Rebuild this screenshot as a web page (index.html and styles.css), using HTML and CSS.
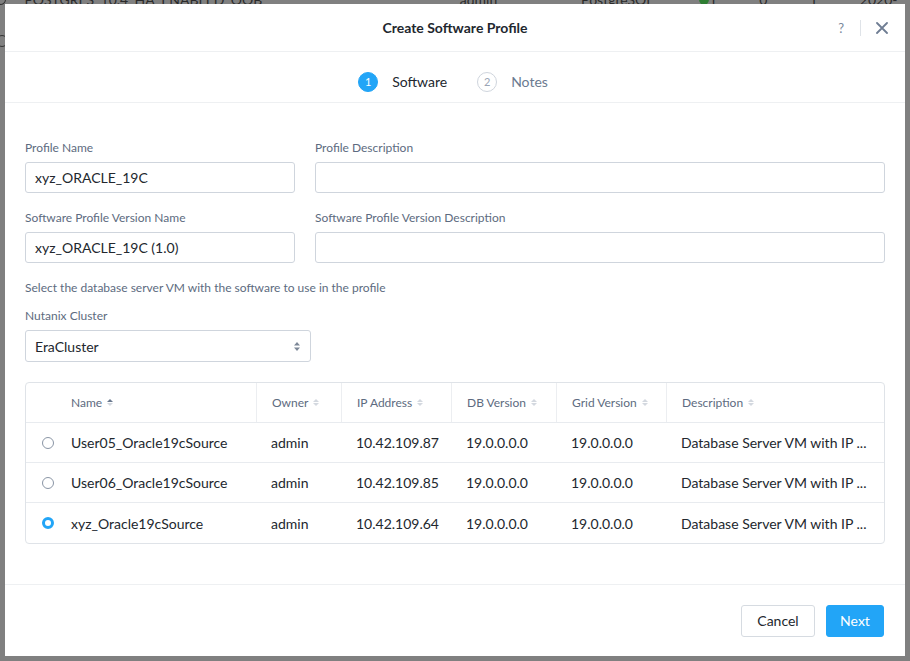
FILE: index.html
```html
<!DOCTYPE html>
<html>
<head>
<meta charset="utf-8">
<link rel="stylesheet" href="styles.css">
</head>
<body>
<div class="backdrop">
  <div class="bg-row">
    <span class="bg-radio"></span>
    <span class="bg-c1">POSTGRES_10.4_HA_ENABLED_OOB</span>
    <span class="bg-c2">admin</span>
    <span class="bg-c3">PostgreSQL</span>
    <span class="bg-dot"></span>
    <span class="bg-c4">1</span>
    <span class="bg-c5">0</span>
    <span class="bg-c6">1</span>
    <span class="bg-c7">2020-</span>
  </div>
  <div class="bg-row bg-row2">
    <span class="bg-radio"></span>
  </div>
</div>

<div class="modal">
  <div class="modal-header">
    <div class="title">Create Software Profile</div>
    <div class="header-actions">
      <span class="help">?</span>
      <span class="divider"></span>
      <svg class="close" width="12" height="12" viewBox="0 0 12 12"><path d="M1 1L11 11M11 1L1 11" stroke="#6f7d93" stroke-width="1.8" stroke-linecap="round"/></svg>
    </div>
  </div>

  <div class="stepper">
    <div class="step active"><span class="step-num">1</span><span class="step-label">Software</span></div>
    <div class="step"><span class="step-num">2</span><span class="step-label">Notes</span></div>
  </div>

  <div class="modal-body">
    <div class="form-row">
      <div class="field narrow">
        <label class="label">Profile Name</label>
        <div class="input">xyz_ORACLE_19C</div>
      </div>
      <div class="field wide">
        <label class="label">Profile Description</label>
        <div class="input"></div>
      </div>
    </div>
    <div class="form-row">
      <div class="field narrow">
        <label class="label">Software Profile Version Name</label>
        <div class="input">xyz_ORACLE_19C (1.0)</div>
      </div>
      <div class="field wide">
        <label class="label">Software Profile Version Description</label>
        <div class="input"></div>
      </div>
    </div>
    <p class="helper">Select the database server VM with the software to use in the profile</p>
    <label class="label cluster-label">Nutanix Cluster</label>
    <div class="select">
      <span>EraCluster</span>
      <svg width="6" height="9" viewBox="0 0 6 9"><path d="M3 0L6 3.5H0Z M3 9L6 5.5H0Z" fill="#7d8898"/></svg>
    </div>

    <div class="table">
      <div class="tr thead">
        <div class="td c-radio"></div>
        <div class="td c-name">Name <span class="sort active-up"><i class="up"></i><i class="down"></i></span></div>
        <div class="td c-owner">Owner <span class="sort"><i class="up"></i><i class="down"></i></span></div>
        <div class="td c-ip">IP Address <span class="sort"><i class="up"></i><i class="down"></i></span></div>
        <div class="td c-db">DB Version <span class="sort"><i class="up"></i><i class="down"></i></span></div>
        <div class="td c-grid">Grid Version <span class="sort"><i class="up"></i><i class="down"></i></span></div>
        <div class="td c-desc">Description <span class="sort"><i class="up"></i><i class="down"></i></span></div>
      </div>
      <div class="tr">
        <div class="td c-radio"><span class="radio"></span></div>
        <div class="td c-name">User05_Oracle19cSource</div>
        <div class="td c-owner">admin</div>
        <div class="td c-ip">10.42.109.87</div>
        <div class="td c-db">19.0.0.0.0</div>
        <div class="td c-grid">19.0.0.0.0</div>
        <div class="td c-desc">Database Server VM with IP ...</div>
      </div>
      <div class="tr">
        <div class="td c-radio"><span class="radio"></span></div>
        <div class="td c-name">User06_Oracle19cSource</div>
        <div class="td c-owner">admin</div>
        <div class="td c-ip">10.42.109.85</div>
        <div class="td c-db">19.0.0.0.0</div>
        <div class="td c-grid">19.0.0.0.0</div>
        <div class="td c-desc">Database Server VM with IP ...</div>
      </div>
      <div class="tr last">
        <div class="td c-radio"><span class="radio checked"></span></div>
        <div class="td c-name">xyz_Oracle19cSource</div>
        <div class="td c-owner">admin</div>
        <div class="td c-ip">10.42.109.64</div>
        <div class="td c-db">19.0.0.0.0</div>
        <div class="td c-grid">19.0.0.0.0</div>
        <div class="td c-desc">Database Server VM with IP ...</div>
      </div>
    </div>
  </div>

  <div class="modal-footer">
    <button class="btn btn-default">Cancel</button>
    <button class="btn btn-primary">Next</button>
  </div>
</div>
</body>
</html>
```

FILE: styles.css
```css
* { box-sizing: border-box; }
html, body { margin: 0; padding: 0; }
body {
  width: 910px;
  height: 661px;
  background: #808080;
  font-family: "Lato", "Liberation Sans", sans-serif;
  color: #22272e;
  overflow: hidden;
  position: relative;
}

.backdrop { color: #2b2b2b; font-size: 14px; }
.bg-row {
  display: flex;
  align-items: center;
  height: 20px;
  margin-top: -11px;
  white-space: nowrap;
}
.bg-row2 { margin-top: 22px; }
.bg-radio {
  width: 12px; height: 12px; border: 1px solid #333; border-radius: 50%;
  margin-left: -4px; margin-right: 18px;
}
.bg-c1 { width: 520px; }
.bg-c2 { width: 145px; }
.bg-c3 { width: 160px; }
.bg-dot { width: 12px; height: 12px; border-radius: 50%; background: #2e7d32; margin-left: -16px; }
.bg-c4, .bg-c5, .bg-c6, .bg-c7 { width: 60px; }

.modal {
  position: absolute;
  left: 5px;
  top: 4px;
  width: 900px;
  height: 652px;
  background: #fff;
  display: flex;
  flex-direction: column;
}

.modal-header {
  height: 48px;
  border-bottom: 1px solid #eef0f2;
  display: flex;
  align-items: center;
  justify-content: center;
  position: relative;
  flex-shrink: 0;
}
.title {
  font-size: 14px;
  font-weight: 700;
  color: #22272e;
}
.header-actions {
  position: absolute;
  right: 17px;
  top: 0;
  height: 48px;
  display: flex;
  align-items: center;
}
.help { font-size: 13px; color: #7b889b; margin-right: 16px; }
.divider { width: 1px; height: 16px; background: #dfe3e8; margin-right: 15px; }
.close { display: block; }

.stepper {
  height: 51px;
  border-bottom: 1px solid #eef0f2;
  display: flex;
  justify-content: center;
  align-items: center;
  gap: 30px;
  flex-shrink: 0;
  padding-right: 4px;
  padding-top: 9px;
}
.step { display: flex; align-items: center; }
.step-num {
  width: 20px; height: 20px; border-radius: 50%;
  border: 1px solid #cfd5dd;
  color: #9aa5b5;
  font-size: 11px;
  display: flex; align-items: center; justify-content: center;
  margin-right: 14px;
}
.step-label { font-size: 14px; color: #6b7a90; }
.step.active .step-num { background: #22a5f7; border-color: #22a5f7; color: #fff; }
.step.active .step-label { color: #22272e; }

.modal-body {
  flex: 1;
  padding: 38px 20px 0 20px;
}
.form-row { display: flex; gap: 20px; margin-bottom: 18px; }
.field { display: flex; flex-direction: column; }
.field.narrow { width: 270px; }
.field.wide { flex: 1; }
.label {
  display: block;
  font-size: 12px;
  line-height: 14px;
  color: #5d6b80;
  margin-bottom: 7px;
}
.input {
  height: 31px;
  border: 1px solid #cfd5dd;
  border-radius: 3px;
  font-size: 14px;
  line-height: 29px;
  padding: 0 9px;
  color: #22272e;
}
.helper {
  margin: 0 0 14px 0;
  font-size: 12px;
  line-height: 14px;
  color: #5d6b80;
}
.select {
  width: 286px;
  height: 32px;
  border: 1px solid #cfd5dd;
  border-radius: 3px;
  display: flex;
  align-items: center;
  justify-content: space-between;
  padding: 0 10px 0 9px;
  font-size: 14px;
  margin-bottom: 20px;
}
.select svg { display: block; }

.table {
  border: 1px solid #dfe3e8;
  border-radius: 4px;
  overflow: hidden;
}
.tr {
  display: flex;
  height: 40px;
  border-bottom: 1px solid #e8ebef;
  font-size: 14px;
  color: #22272e;
}
.tr.last { border-bottom: 0; height: 40px; }
.td {
  display: flex;
  align-items: center;
  padding-left: 15px;
  white-space: nowrap;
}
.thead .td { font-size: 12px; color: #5d6b80; }
.thead .td + .td + .td { border-left: 1px solid #eceef1; }
.c-radio { width: 30px; padding-left: 16px; }
.c-name { width: 200px; }
.c-owner { width: 85px; }
.c-ip { width: 110px; }
.c-db { width: 105px; }
.c-grid { width: 110px; }
.c-desc { flex: 1; }

.sort {
  display: inline-flex;
  flex-direction: column;
  gap: 1px;
  margin-left: 5px;
}
.sort i {
  display: block;
  width: 0; height: 0;
  border-left: 3px solid transparent;
  border-right: 3px solid transparent;
}
.sort .up { border-bottom: 3px solid #d3d8df; }
.sort .down { border-top: 3px solid #d3d8df; }
.sort.active-up .up { border-bottom-color: #6b7a90; }

.radio {
  width: 12px; height: 12px;
  border-radius: 50%;
  border: 1px solid #8a95a5;
  display: block;
}
.radio.checked { border: 3.5px solid #22a5f7; background: #fff; }

.modal-footer {
  height: 72px;
  border-top: 1px solid #eef0f2;
  display: flex;
  justify-content: flex-end;
  align-items: center;
  gap: 11px;
  padding-right: 21px;
  flex-shrink: 0;
}
.btn {
  height: 32px;
  border-radius: 3px;
  font-family: inherit;
  font-size: 14px;
  padding: 0;
  cursor: pointer;
}
.btn-default { width: 74px; background: #fff; border: 1px solid #d6dbe1; color: #22272e; }
.btn-primary { width: 58px; background: #22a5f7; border: 1px solid #22a5f7; color: #fff; }
```
